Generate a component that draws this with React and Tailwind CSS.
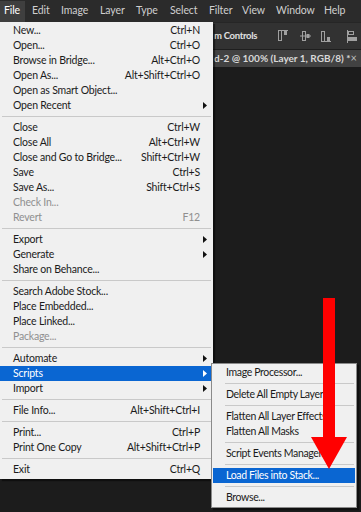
import React from 'react';

const menuBar = [
  ['File', 25, 4],
  ['Edit', 29, 7],
  ['Image', 39, 7],
  ['Layer', 36, 7],
  ['Type', 34, 7],
  ['Select', 39, 7],
  ['Filter', 33, 7],
  ['View', 34, 7],
  ['Window', 48, 7],
  ['Help', 37, 7],
];

const fileMenu = [
  { l: 'New...', s: 'Ctrl+N' },
  { l: 'Open...', s: 'Ctrl+O' },
  { l: 'Browse in Bridge...', s: 'Alt+Ctrl+O' },
  { l: 'Open As...', s: 'Alt+Shift+Ctrl+O' },
  { l: 'Open as Smart Object...' },
  { l: 'Open Recent', sub: true },
  'sep',
  { l: 'Close', s: 'Ctrl+W' },
  { l: 'Close All', s: 'Alt+Ctrl+W' },
  { l: 'Close and Go to Bridge...', s: 'Shift+Ctrl+W' },
  { l: 'Save', s: 'Ctrl+S' },
  { l: 'Save As...', s: 'Shift+Ctrl+S' },
  { l: 'Check In...', off: true },
  { l: 'Revert', s: 'F12', off: true },
  'sep',
  { l: 'Export', sub: true },
  { l: 'Generate', sub: true },
  { l: 'Share on Behance...' },
  'sep',
  { l: 'Search Adobe Stock...' },
  { l: 'Place Embedded...' },
  { l: 'Place Linked...' },
  { l: 'Package...', off: true },
  'sep',
  { l: 'Automate', sub: true },
  { l: 'Scripts', sub: true, on: true },
  { l: 'Import', sub: true },
  'sep',
  { l: 'File Info...', s: 'Alt+Shift+Ctrl+I' },
  'sep',
  { l: 'Print...', s: 'Ctrl+P' },
  { l: 'Print One Copy', s: 'Alt+Shift+Ctrl+P' },
  'sep',
  { l: 'Exit', s: 'Ctrl+Q' },
];

const scriptsMenu = [
  { l: 'Image Processor...' },
  'sep',
  { l: 'Delete All Empty Layers' },
  'sep',
  { l: 'Flatten All Layer Effects' },
  { l: 'Flatten All Masks' },
  'sep',
  { l: 'Script Events Manager...' },
  'sep',
  { l: 'Load Files into Stack...', on: true },
  'sep',
  { l: 'Browse...' },
];

function Arrow({ white }) {
  return (
    <svg width="4" height="7" viewBox="0 0 4 7" className="absolute right-[6px] top-[4px]">
      <path d="M0 0 L4 3.5 L0 7 Z" fill={white ? '#ffffff' : '#111111'} />
    </svg>
  );
}

function AlignIcons() {
  return (
    <div className="flex items-center shrink-0">
      <svg width="10" height="12" viewBox="0 0 10 12" className="ml-[21px]">
        <path d="M0 0.5 H10" stroke="#a0a0a0" />
        <rect x="0.5" y="0.5" width="3" height="10" fill="none" stroke="#a0a0a0" />
        <rect x="6" y="1" width="3" height="4" fill="#a0a0a0" />
      </svg>
      <svg width="11" height="12" viewBox="0 0 11 12" className="ml-[12px]">
        <path d="M0 6 H11" stroke="#a0a0a0" />
        <rect x="2.5" y="1.5" width="3" height="9" fill="none" stroke="#a0a0a0" />
        <rect x="6.5" y="4" width="3" height="4" fill="#a0a0a0" />
      </svg>
      <svg width="10" height="12" viewBox="0 0 10 12" className="ml-[10px]">
        <path d="M0 11.5 H10" stroke="#a0a0a0" />
        <rect x="0.5" y="1.5" width="3" height="10" fill="none" stroke="#a0a0a0" />
        <rect x="6" y="7" width="3" height="4" fill="#a0a0a0" />
      </svg>
      <svg width="10" height="13" viewBox="0 0 10 13" className="ml-[16px]">
        <path d="M0.5 0 V13" stroke="#a0a0a0" />
        <rect x="1.5" y="1.5" width="5" height="3" fill="none" stroke="#a0a0a0" />
        <rect x="1" y="7" width="9" height="4" fill="#a0a0a0" />
      </svg>
    </div>
  );
}

export default function App() {
  return (
    <div
      className="relative w-[361px] h-[512px] overflow-hidden bg-[#1c1c1c] text-[10.5px] tracking-[-0.2px] whitespace-nowrap"
      style={{ fontFamily: 'Lato, "Open Sans", sans-serif' }}
    >
      {/* menu bar */}
      <div className="flex h-[22px] items-center bg-[#2b2b2b] text-[#cfcfcf] text-[10.5px] tracking-[-0.1px]">
        {menuBar.map(([name, w, pl], i) => (
          <div
            key={name}
            className={`h-[21px] flex items-center shrink-0 ${i === 0 ? 'bg-[#3f3f3f] text-white' : ''}`}
            style={{ width: w, paddingLeft: pl }}
          >
            {name}
          </div>
        ))}
      </div>

      {/* options bar */}
      <div className="flex h-[27px] items-center bg-[#323232] border-t border-[#262626] pl-[214px] overflow-hidden">
        <span className="text-[#e0e0e0] font-bold text-[9.5px] tracking-[-0.3px]">m Controls</span>
        <AlignIcons />
      </div>

      {/* document tab */}
      <div className="flex h-[18px] items-center bg-[#424242] border-t border-[#1e1e1e] pl-[214px] pr-[8px] text-[#d8d8d8] text-[10px] tracking-normal">
        <span className="font-bold">d-2 @ 100% (Layer 1, RGB/8) *</span>
        <span className="ml-auto text-[#bbbbbb] text-[11px]">×</span>
      </div>

      {/* File menu */}
      <div className="absolute left-0 top-[22px] w-[213px] bg-[#f0f0f0] pt-px pb-[2px] text-[#1b1b1b] shadow-[2px_2px_1px_rgba(0,0,0,0.45)]">
        {fileMenu.map((it, i) =>
          it === 'sep' ? (
            <div key={i} className="h-[7px] flex items-center px-[2px]">
              <div className="h-px w-full bg-[#c9c9c9]" />
            </div>
          ) : (
            <div
              key={i}
              className={`relative flex h-[15px] items-center pl-[13px] pr-[13px] ${
                it.on ? 'bg-[#0a66d2] text-white' : it.off ? 'text-[#8f8f8f]' : ''
              }`}
            >
              <span>{it.l}</span>
              {it.s && <span className="ml-auto">{it.s}</span>}
              {it.sub && <Arrow white={it.on} />}
            </div>
          )
        )}
      </div>

      {/* Scripts submenu */}
      <div className="absolute left-[211px] top-[363px] w-[146px] bg-[#f0f0f0] border border-[#8a8a8a] pt-px pb-[2px] text-[#1b1b1b] tracking-[-0.35px] shadow-[2px_2px_1px_rgba(0,0,0,0.45)]">
        {scriptsMenu.map((it, i) =>
          it === 'sep' ? (
            <div key={i} className="h-[7px] flex items-center pl-[13px] pr-[2px]">
              <div className="h-px w-full bg-[#c9c9c9]" />
            </div>
          ) : (
            <div
              key={i}
              className={`mx-px flex h-[15px] items-center pl-[13px] ${
                it.on ? 'bg-[#0a66d2] text-white' : ''
              }`}
            >
              {it.l}
            </div>
          )
        )}
      </div>

      {/* red arrow */}
      <svg
        className="absolute left-[306px] top-[298px]"
        width="44"
        height="172"
        viewBox="0 0 44 172"
      >
        <rect x="17" y="0" width="12" height="140" fill="#ff0000" />
        <path d="M5 139 L41 139 L23 171 Z" fill="#ff0000" />
      </svg>
    </div>
  );
}
